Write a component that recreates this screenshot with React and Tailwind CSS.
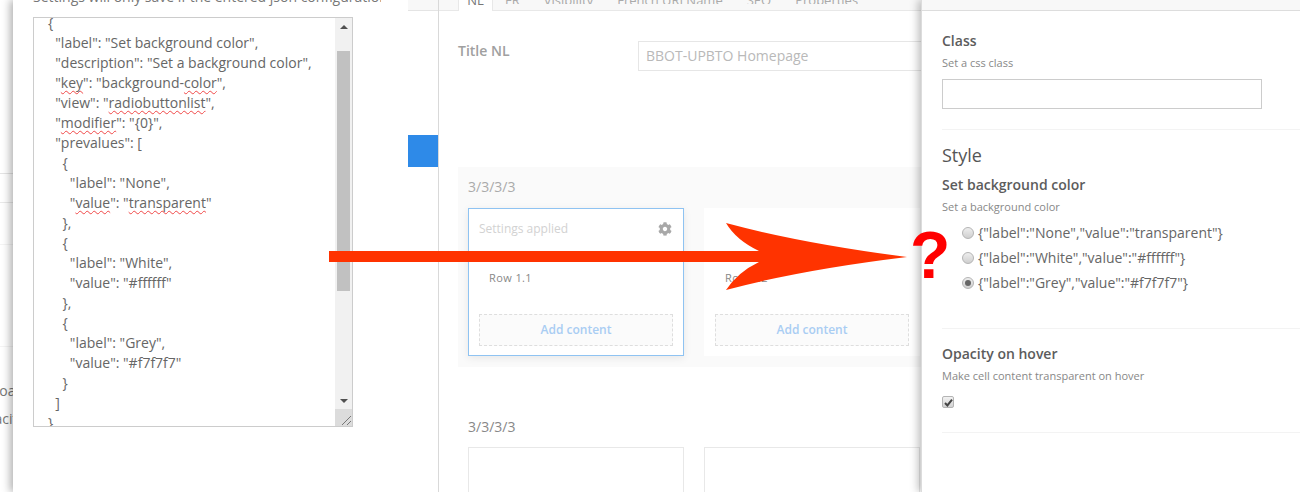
import React from "react";
import { FaCog } from "react-icons/fa";

const Sq = ({ children }) => (
  <span className="underline decoration-wavy decoration-[#f04848] decoration-1 underline-offset-2 [text-decoration-skip-ink:none]">{children}</span>
);

const Radio = ({ checked, children }) => (
  <div className="flex items-center h-[25px] pl-5">
    <span className="w-[12px] h-[12px] rounded-full border border-[#b4b4b4] bg-gradient-to-b from-[#eeeeee] to-[#cfcfcf] flex items-center justify-center shrink-0">
      {checked && <span className="w-[6px] h-[6px] rounded-full bg-[#666]" />}
    </span>
    <span className="ml-[4px] text-[14px] text-[#666] whitespace-nowrap">{children}</span>
  </div>
);

const Cell = ({ active, label, title }) => (
  <div className={`w-[216px] shrink-0 h-[148px] flex flex-col px-[10px] bg-white ${active ? "border border-[#8fc3f2] shadow-[0_2px_8px_rgba(0,0,0,0.08)]" : "border border-white"}`}>
    <div className="h-[40px] flex items-center justify-between text-[12px] text-[#d2d2d2]">
      <span>{title || "\u00a0"}</span>
      {active && <FaCog className="text-[#a8a8a8] text-[14px] mr-[1px]" />}
    </div>
    <div className="pl-[10px] mt-[19px] h-[19px] text-[11px] tracking-[0.4px] text-[#888] leading-[19px]">{label}</div>
    <div className="mt-[27px] h-[32px] border border-dashed border-[#dedede] bg-[#fbfbfb] flex items-center justify-center text-[12px] font-semibold text-[#a9cdf3]">
      Add content
    </div>
  </div>
);

export default function App() {
  return (
    <div className="relative flex h-[492px] w-[1300px] overflow-hidden bg-white font-['Open_Sans',sans-serif]">
      {/* page behind the dialog */}
      <div className="w-[13px] shrink-0 h-full overflow-hidden text-[14px] text-[#777] flex flex-col">
        <div className="h-[174px] shrink-0 border-b border-[#e4e4e4]" />
        <div className="h-[29px] shrink-0 border-b border-[#e9e9e9]" />
        <div className="h-[42px] shrink-0 border-b border-[#f4f4f4]" />
        <div className="mt-[32px] h-[20px] leading-[20px] whitespace-nowrap -ml-[52px]">Settings</div>
        <div className="h-[50px] shrink-0 border-b border-[#f4f4f4]" />
        <div className="mt-[34px] h-[20px] leading-[20px] whitespace-nowrap -ml-[23px]">Upload</div>
        <div className="mt-[8px] h-[20px] leading-[20px] whitespace-nowrap -ml-[25px]">Opacity</div>
      </div>

      {/* dialog */}
      <div className="relative z-10 w-[395px] shrink-0 h-full bg-white shadow-[-3px_0_8px_rgba(0,0,0,0.3)] pl-[20px] overflow-hidden">
        <div className="-mt-[13px] h-[30px] leading-[20px] text-[14px] text-[#777] whitespace-nowrap overflow-hidden w-[348px]">
          Settings will only save if the entered json configuration is valid
        </div>
        <div className="relative w-[320px] h-[410px] border border-[#cccccc] flex overflow-hidden">
          <pre className="flex-1 pl-[14px] -mt-[5px] font-['Open_Sans',sans-serif] text-[14px] leading-[20px] text-[#666]">
{`{
  "label": "Set background color",
  "description": "Set a background color",
  "`}<Sq>key</Sq>{`": "background-`}<Sq>color</Sq>{`",
  "view": "`}<Sq>radiobuttonlist</Sq>{`",
  "`}<Sq>modifier</Sq>{`": "{0}",
  "prevalues": [
    {
      "label": "None",
      "`}<Sq>value</Sq>{`": "`}<Sq>transparent</Sq>{`"
    },
    {
      "label": "White",
      "value": "#ffffff"
    },
    {
      "label": "Grey",
      "value": "#f7f7f7"
    }
  ]
}`}
          </pre>
          <div className="w-[17px] shrink-0 h-full bg-[#f1f1f1] flex flex-col items-center">
            <div className="h-[17px] flex items-center justify-center shrink-0">
              <span className="w-0 h-0 border-x-[4px] border-x-transparent border-b-[4px] border-b-[#505050]" />
            </div>
            <div className="mt-[16px] w-[13px] h-[240px] bg-[#c1c1c1] shrink-0" />
            <div className="flex-1" />
            <div className="h-[17px] flex items-center justify-center shrink-0">
              <span className="w-0 h-0 border-x-[4px] border-x-transparent border-t-[4px] border-t-[#505050]" />
            </div>
            <div className="h-[17px] w-full bg-[#dcdcdc] shrink-0 flex items-end justify-end">
              <svg width="11" height="11" viewBox="0 0 11 11" stroke="#777" strokeWidth="1" fill="none">
                <path d="M1 10 L10 1 M6 10 L10 6" />
              </svg>
            </div>
          </div>
        </div>
      </div>

      {/* sliver of page with blue block */}
      <div className="relative z-10 w-[30px] shrink-0 h-full bg-white flex flex-col">
        <div className="h-[11px] bg-[#f8f8f8] border-b border-[#e4e4e4] shrink-0" />
        <div className="mt-[124px] h-[32px] bg-[#2e8ae8] shrink-0" />
      </div>

      {/* main content */}
      <div className="w-[483px] shrink-0 h-full border-l border-[#d9d9d9] overflow-hidden">
        <div className="relative h-[11px] bg-[#f8f8f8] border-b border-[#e8e8e8] flex pl-[19px] text-[13px] text-[#aaa] overflow-visible">
          <div className="w-[35px] h-[11px] bg-white border-x border-[#e8e8e8] flex items-end justify-center leading-[13px] text-[#777] overflow-hidden">
            <span className="relative -top-[4px]">NL</span>
          </div>
          <div className="flex items-start gap-[24px] pl-[12px] overflow-hidden h-[10px] whitespace-nowrap leading-[13px] -mt-[6px]">
            <span>FR</span><span>Visibility</span><span>French URLName</span><span>SEO</span><span>Properties</span>
          </div>
        </div>
        <div className="mt-[30px] flex pl-[19px] h-[30px]">
          <div className="w-[180px] text-[14px] font-semibold text-[#a0a0a0] leading-[20px]">Title NL</div>
          <div className="flex-1 h-[30px] border border-[#e6e6e6] border-r-0 pl-[7px] text-[14px] leading-[28px] text-[#b9b9b9] whitespace-nowrap">
            BBOT-UPBTO Homepage
          </div>
        </div>
        <div className="mt-[96px] ml-[19px] h-[200px] bg-[#fafafa] pl-[10px] pt-[9px]">
          <div className="h-[32px] leading-[22px] text-[14px] text-[#aaaaaa]">3/3/3/3</div>
          <div className="flex gap-[20px]">
            <Cell active title="Settings applied" label="Row 1.1" />
            <Cell label="Row 1.2" />
          </div>
        </div>
        <div className="ml-[29px] mt-[49px] h-[22px] leading-[22px] text-[14px] text-[#888]">3/3/3/3</div>
        <div className="ml-[29px] mt-[9px] flex gap-[20px]">
          <div className="w-[216px] shrink-0 h-[60px] border border-[#e8e8e8]" />
          <div className="w-[216px] shrink-0 h-[60px] border border-[#e8e8e8]" />
        </div>
      </div>

      {/* right panel */}
      <div className="relative z-10 flex-1 h-full bg-white border-l border-[#dcdcdc] shadow-[-3px_0_8px_rgba(0,0,0,0.25)] overflow-hidden">
        <div className="h-[11px] bg-[#f8f8f8] border-b border-[#dddddd]" />
        <div className="pl-[20px]">
          <div className="mt-[20px] h-[20px] leading-[20px] text-[14px] font-semibold text-[#5c5c5c]">Class</div>
          <div className="mt-[3px] h-[18px] leading-[18px] text-[11px] text-[#888]">Set a css class</div>
          <div className="mt-[7px] w-[320px] h-[30px] border border-[#cccccc]" />
          <div className="mt-[20px] border-t border-[#f3f3f3]" />
          <div className="mt-[12px] h-[26px] leading-[26px] text-[18px] text-[#555]">Style</div>
          <div className="mt-[7px] h-[20px] leading-[20px] text-[14px] font-semibold text-[#5c5c5c]">Set background color</div>
          <div className="mt-[3px] h-[18px] leading-[18px] text-[11px] text-[#888]">Set a background color</div>
          <div className="mt-[4px]">
            <Radio>{'{"label":"None","value":"transparent"}'}</Radio>
            <Radio>{'{"label":"White","value":"#ffffff"}'}</Radio>
            <Radio checked>{'{"label":"Grey","value":"#f7f7f7"}'}</Radio>
          </div>
          <div className="mt-[33px] border-t border-[#f3f3f3]" />
          <div className="mt-[15px] h-[20px] leading-[20px] text-[14px] font-semibold text-[#5c5c5c]">Opacity on hover</div>
          <div className="mt-[3px] h-[18px] leading-[18px] text-[11px] text-[#888]">Make cell content transparent on hover</div>
          <div className="mt-[11px] w-[12px] h-[12px] rounded-[2px] border border-[#b4b4b4] bg-gradient-to-b from-[#f2f2f2] to-[#d2d2d2] flex items-center justify-center">
            <svg width="9" height="9" viewBox="0 0 9 9"><path d="M1 5 L3.4 7.4 L8 1.6" stroke="#444" strokeWidth="2" fill="none" /></svg>
          </div>
          <div className="mt-[24px] border-t border-[#f3f3f3]" />
        </div>
      </div>

      {/* annotation overlay */}
      <svg className="absolute z-20 left-0 top-0 pointer-events-none" width="1300" height="492">
        <path
          d="M329 251 L759 251 Q736 240 726 223 Q800 243 907 257 Q800 270 726 290 Q738 272 759 262 L329 262 Z"
          fill="#ff3300"
        />
      </svg>
      <div className="absolute z-20 left-[910px] top-[218px] text-[66px] leading-[74px] font-bold text-[#ff0000] font-['Liberation_Sans',sans-serif]">?</div>
    </div>
  );
}
